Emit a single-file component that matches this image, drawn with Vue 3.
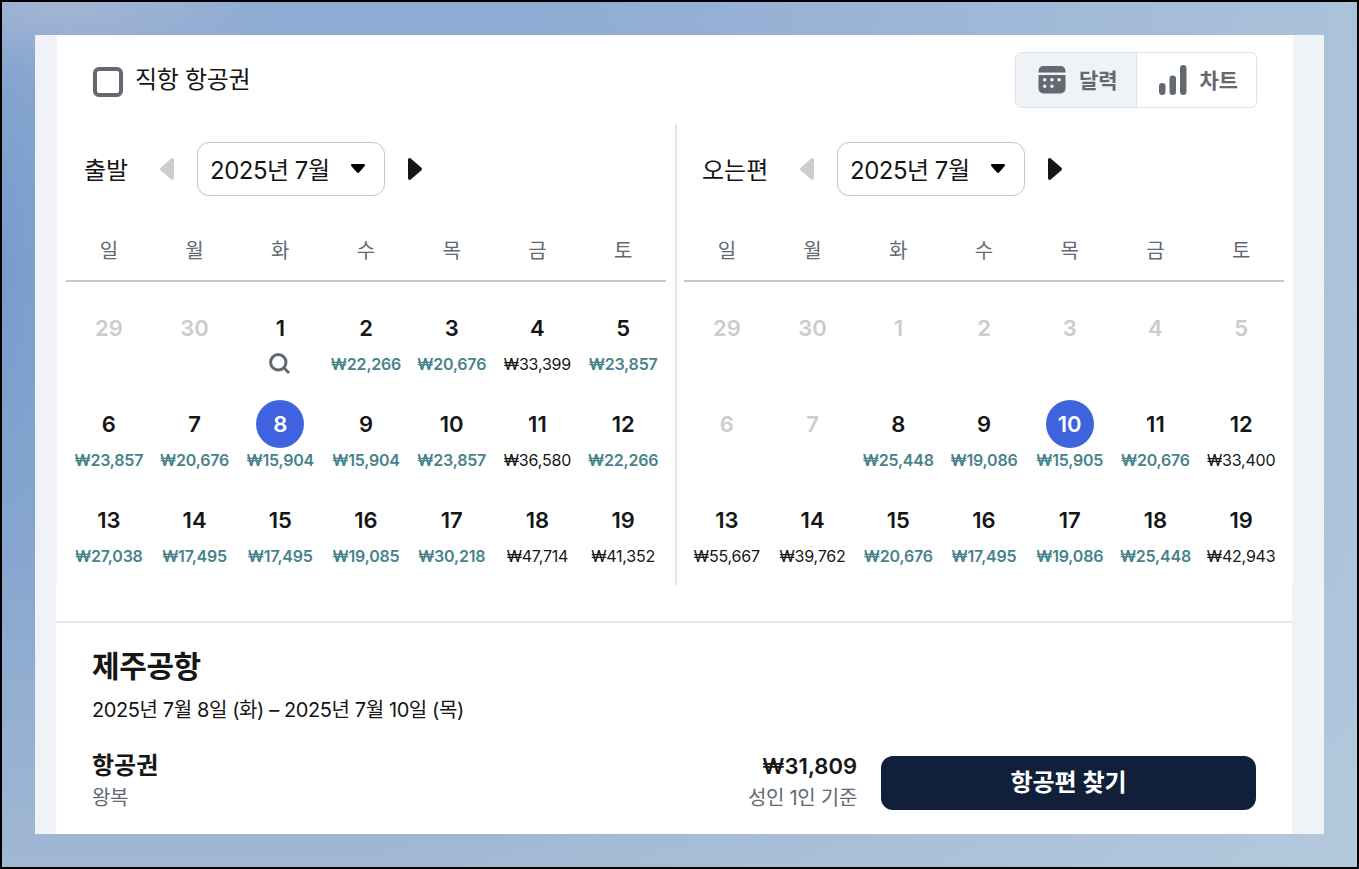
<script setup>
import { ref } from "vue";

const directOnly = ref(false);
const view = ref("calendar");
const weekdays = ["일", "월", "화", "수", "목", "금", "토"];

// day, price, state (low: 최저가, off: 선택 불가, search: 가격 없음)
const outbound = [
  { day: 29, off: true },
  { day: 30, off: true },
  { day: 1, search: true },
  { day: 2, price: "22,266", low: true },
  { day: 3, price: "20,676", low: true },
  { day: 4, price: "33,399" },
  { day: 5, price: "23,857", low: true },
  { day: 6, price: "23,857", low: true },
  { day: 7, price: "20,676", low: true },
  { day: 8, price: "15,904", low: true },
  { day: 9, price: "15,904", low: true },
  { day: 10, price: "23,857", low: true },
  { day: 11, price: "36,580" },
  { day: 12, price: "22,266", low: true },
  { day: 13, price: "27,038", low: true },
  { day: 14, price: "17,495", low: true },
  { day: 15, price: "17,495", low: true },
  { day: 16, price: "19,085", low: true },
  { day: 17, price: "30,218", low: true },
  { day: 18, price: "47,714" },
  { day: 19, price: "41,352" },
];
const inbound = [
  { day: 29, off: true },
  { day: 30, off: true },
  { day: 1, off: true },
  { day: 2, off: true },
  { day: 3, off: true },
  { day: 4, off: true },
  { day: 5, off: true },
  { day: 6, off: true },
  { day: 7, off: true },
  { day: 8, price: "25,448", low: true },
  { day: 9, price: "19,086", low: true },
  { day: 10, price: "15,905", low: true },
  { day: 11, price: "20,676", low: true },
  { day: 12, price: "33,400" },
  { day: 13, price: "55,667" },
  { day: 14, price: "39,762" },
  { day: 15, price: "20,676", low: true },
  { day: 16, price: "17,495", low: true },
  { day: 17, price: "19,086", low: true },
  { day: 18, price: "25,448", low: true },
  { day: 19, price: "42,943" },
];

const calendars = ref([
  { id: "outbound", label: "출발", selected: 8, days: outbound },
  { id: "inbound", label: "오는편", selected: 10, days: inbound },
]);

const selectDay = (calendar, item) => {
  if (item.off) return;
  calendar.selected = item.day;
};
</script>

<template>
  <div class="page">
    <div class="panel">
      <section class="picker">
        <header class="toolbar">
          <label class="direct">
            <input v-model="directOnly" type="checkbox" class="checkbox" />
            <span>직항 항공권</span>
          </label>
          <div class="toggle">
            <button
              class="toggle-item"
              :class="{ active: view === 'calendar' }"
              @click="view = 'calendar'"
            >
              <svg class="icon-calendar" width="28" height="28" viewBox="0 0 28 28">
                <path d="M0.5 6.5V5a5 5 0 0 1 5-5h17a5 5 0 0 1 5 5v1.5z" />
                <path
                  fill-rule="evenodd"
                  d="M0.5 9h27v13.500a5 5 0 0 1-5 5h-17a5 5 0 0 1-5-5zM6.700 12a1.800 1.800 0 1 0 0 3.600 1.800 1.800 0 0 0 0-3.600zm7.200 0a1.800 1.800 0 1 0 0 3.600 1.800 1.800 0 0 0 0-3.600zm7.200 0a1.800 1.800 0 1 0 0 3.600 1.800 1.800 0 0 0 0-3.600zM6.700 18.500a1.800 1.800 0 1 0 0 3.600 1.800 1.800 0 0 0 0-3.600zm7.200 0a1.800 1.800 0 1 0 0 3.600 1.800 1.800 0 0 0 0-3.600z"
                />
              </svg>
              <span>달력</span>
            </button>
            <button
              class="toggle-item"
              :class="{ active: view === 'chart' }"
              @click="view = 'chart'"
            >
              <svg class="icon-chart" width="28" height="30" viewBox="0 0 28 30">
                <rect x="0" y="18" width="6.500" height="12" rx="3.250" />
                <rect x="10.500" y="10.500" width="6.500" height="19.500" rx="3.250" />
                <rect x="21" y="0" width="6.500" height="30" rx="3.250" />
              </svg>
              <span>차트</span>
            </button>
          </div>
        </header>

        <div class="calendars">
          <div
            v-for="calendar in calendars"
            :key="calendar.id"
            class="calendar"
            :class="calendar.id"
          >
            <div class="month-bar">
              <span class="month-label">{{ calendar.label }}</span>
              <svg class="arrow prev" width="14" height="22" viewBox="0 0 14 22">
                <path d="M14 2v18c0 1.800-1.700 2.500-3 1.300L0.800 12.400a1.900 1.900 0 0 1 0-2.800L11 0.700C12.300-.5 14 .2 14 2z" />
              </svg>
              <button class="month-select">
                <span>2025년 7월</span>
                <svg width="14" height="10" viewBox="0 0 14 10">
                  <path d="M1.500 0h11c1.400 0 2 1.300 1 2.300L8.300 8.200a1.800 1.800 0 0 1-2.600 0L.5 2.300C-.5 1.300.1 0 1.500 0z" />
                </svg>
              </button>
              <svg class="arrow" width="14" height="22" viewBox="0 0 14 22">
                <path d="M0 2v18c0 1.800 1.700 2.500 3 1.300l10.200-8.900a1.900 1.900 0 0 0 0-2.800L3 .7C1.700-.5 0 .2 0 2z" />
              </svg>
            </div>

            <div class="weekdays">
              <span v-for="name in weekdays" :key="name">{{ name }}</span>
            </div>

            <div class="days">
              <div
                v-for="(item, index) in calendar.days"
                :key="index"
                class="cell"
                :class="{
                  off: item.off,
                  low: item.low,
                  selected: !item.off && item.day === calendar.selected,
                }"
                @click="selectDay(calendar, item)"
              >
                <span class="day">{{ item.day }}</span>
                <span v-if="item.price" class="price">₩{{ item.price }}</span>
                <svg
                  v-if="item.search"
                  class="icon-search"
                  width="22"
                  height="22"
                  viewBox="0 0 22 22"
                >
                  <circle cx="9.300" cy="9.300" r="7.700" />
                  <path d="M14.800 14.800l5.200 5.200" />
                </svg>
              </div>
            </div>
          </div>
        </div>
      </section>

      <section class="summary">
        <h2>제주공항</h2>
        <p class="dates">2025년 7월 8일 (화) – 2025년 7월 10일 (목)</p>
        <div class="booking">
          <div class="ticket">
            <strong>항공권</strong>
            <span>왕복</span>
          </div>
          <div class="total">
            <strong>₩31,809</strong>
            <span>성인 1인 기준</span>
          </div>
          <button class="find">항공편 찾기</button>
        </div>
      </section>
    </div>
  </div>
</template>

<style>
body {
  margin: 0;
}
</style>

<style scoped>
.page {
  box-sizing: border-box;
  width: 1359px;
  height: 869px;
  padding: 33px;
  border: 2px solid #000;
  background:
    radial-gradient(ellipse 220px 70px at 60px 0, #a3b5d3, transparent),
    radial-gradient(ellipse 90px 320px at 0 270px, #779bcb, transparent),
    linear-gradient(100deg, transparent 35%, rgba(183, 203, 222, 0.85) 100%),
    linear-gradient(180deg, #8eabd3 0%, #87a7cf 65%, #a1b8d4 100%);
  font-family: Inter, "Noto Sans CJK KR", sans-serif;
  color: #161616;
}
button {
  padding: 0;
  border: 0;
  background: none;
  font: inherit;
  color: inherit;
  cursor: pointer;
}
span,
strong {
  white-space: nowrap;
}
.panel {
  width: 1289px;
  height: 799px;
  background: #eff3f8;
}
.picker {
  box-sizing: border-box;
  width: 1236px;
  height: 550px;
  margin-left: 22px;
  padding-top: 17px;
  background: #fff;
}
.toolbar {
  display: flex;
  justify-content: space-between;
  align-items: center;
  height: 56px;
  padding: 0 36px;
}
.direct {
  display: flex;
  align-items: center;
  gap: 12px;
  font-size: 24px;
  line-height: 32px;
  letter-spacing: -0.3px;
  padding-top: 3px;
}
.direct span {
  margin-top: -4px;
}
.checkbox {
  appearance: none;
  box-sizing: border-box;
  width: 30px;
  height: 30px;
  margin: 0;
  border: 4px solid #626971;
  border-radius: 6px;
}
.toggle {
  box-sizing: border-box;
  display: flex;
  width: 242px;
  height: 56px;
  border: 1px solid #e0e4e9;
  border-radius: 6px;
  overflow: hidden;
}
.toggle-item {
  box-sizing: border-box;
  display: flex;
  align-items: center;
  width: 120px;
  padding-left: 22px;
  color: #626971;
  font-size: 21px;
  font-weight: 700;
}
.toggle-item span {
  margin-top: -2px;
}
.toggle-item.active {
  width: 121px;
  border-right: 1px solid #e0e4e9;
  background: #eff3f8;
}
.toggle-item svg {
  fill: currentColor;
  margin-right: 13px;
}
.calendars {
  display: flex;
  height: 473px;
  margin-top: 16px;
}
.calendar {
  box-sizing: border-box;
  width: 618px;
  padding: 18px 9px 0;
}
.calendar.inbound {
  padding-left: 7px;
  border-left: 2px solid #e3e6ec;
}
.month-bar {
  display: flex;
  align-items: center;
  height: 54px;
  padding-left: 18px;
}
.month-label {
  width: 76px;
  font-size: 24px;
}
.inbound .month-label {
  width: 98px;
}
.month-label,
.month-select span {
  position: relative;
  top: -1px;
}
.arrow {
  fill: #161616;
}
.arrow.prev {
  fill: #ccc;
}
.month-select {
  box-sizing: border-box;
  display: flex;
  align-items: center;
  justify-content: space-between;
  width: 188px;
  height: 54px;
  margin: 0 23px;
  padding: 0 19px 0 12px;
  border: 1px solid #c1c7cf;
  border-radius: 12px;
  font-size: 24px;
  letter-spacing: -0.5px;
}
.weekdays {
  display: grid;
  grid-template-columns: repeat(7, 1fr);
  box-sizing: border-box;
  height: 58px;
  margin-top: 28px;
  border-bottom: 2px solid #c5c9d0;
  color: #626971;
  font-size: 20px;
  line-height: 54px;
  text-align: center;
}
.days {
  display: grid;
  grid-template-columns: repeat(7, 1fr);
  grid-auto-rows: 96px;
  margin-top: 22px;
}
.cell {
  display: flex;
  flex-direction: column;
  align-items: center;
  cursor: pointer;
}
.day {
  width: 48px;
  height: 48px;
  border-radius: 50%;
  font-size: 22px;
  font-weight: 600;
  line-height: 48px;
  text-align: center;
}
.price {
  font-size: 16px;
  line-height: 24px;
  letter-spacing: -0.2px;
}
.off {
  color: #ccc;
  cursor: default;
}
.low .price {
  color: #47838a;
  font-weight: 600;
}
.selected .day {
  background: #3f63dc;
  color: #fff;
}
.icon-search {
  margin-top: 1px;
  fill: none;
  stroke: #626971;
  stroke-width: 3;
}
.summary {
  box-sizing: border-box;
  position: relative;
  width: 1236px;
  height: 249px;
  margin-left: 21px;
  padding: 36px 36px 0;
  background: #fff;
}
/* 달력과 요약 사이 구분선 */
.summary::before {
  content: "";
  display: block;
  height: 2px;
  margin: 0 -36px;
  background: #e3e6eb;
}
.summary h2 {
  margin: 21px 0 0;
  font-size: 30px;
  line-height: 44px;
  letter-spacing: -0.4px;
}
.dates {
  margin: 6px 0 0;
  font-size: 20px;
  line-height: 32px;
  letter-spacing: -0.4px;
}
.booking {
  display: flex;
  height: 64px;
  margin-top: 24px;
}
.ticket,
.total {
  display: flex;
  flex-direction: column;
}
.ticket strong,
.total strong {
  font-size: 24px;
  line-height: 32px;
}
.total strong {
  font-size: 22px;
  font-weight: 600;
}
.ticket span,
.total span {
  color: #626971;
  font-size: 20px;
  line-height: 32px;
  letter-spacing: -0.3px;
}
.total {
  margin-left: auto;
  align-items: flex-end;
}
.find {
  width: 375px;
  height: 54px;
  margin: 6px 0 0 24px;
  border-radius: 12px;
  background: #10203a;
  color: #fff;
  font-size: 24px;
  font-weight: 700;
  line-height: 50px;
}
</style>
